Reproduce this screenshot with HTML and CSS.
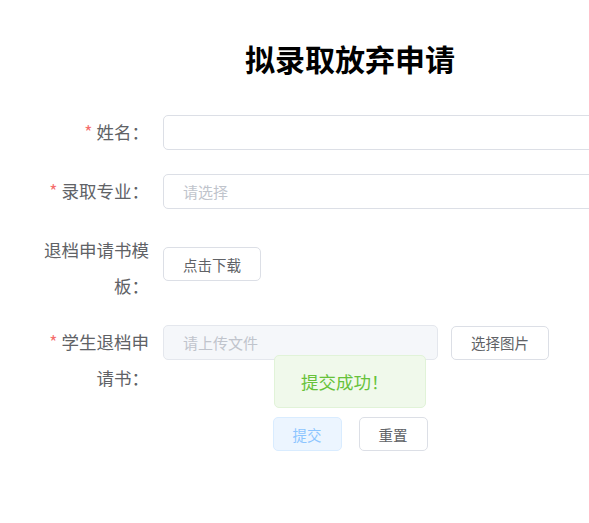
FILE: index.html
```html
<!DOCTYPE html>
<html lang="zh-CN">
<head>
  <meta charset="UTF-8">
  <meta name="viewport" content="width=device-width, initial-scale=1.0">
  <title>拟录取放弃申请</title>
  <link rel="stylesheet" href="styles.css">
</head>
<body>

  <div class="page">
    <h2 class="title">拟录取放弃申请</h2>

    <form class="apply-form">
      <div class="form-item">
        <label class="form-label is-required" for="name">姓名：</label>
        <div class="form-content">
          <input class="text-input" type="text" id="name">
        </div>
      </div>

      <div class="form-item">
        <label class="form-label is-required" for="major">录取专业：</label>
        <div class="form-content">
          <input class="text-input" type="text" id="major" placeholder="请选择" readonly>
        </div>
      </div>

      <div class="form-item form-item-tall">
        <label class="form-label">退档申请书模板：</label>
        <div class="form-content download-content">
          <button class="btn" type="button">点击下载</button>
        </div>
      </div>

      <div class="form-item form-item-tall">
        <label class="form-label is-required" for="file">学生退档申请书：</label>
        <div class="form-content upload-content">
          <input class="text-input upload-input" type="text" id="file" placeholder="请上传文件" disabled>
          <button class="btn" type="button">选择图片</button>
        </div>
      </div>

      <div class="form-actions">
        <button class="btn btn-primary" type="button" disabled>提交</button>
        <button class="btn" type="reset">重置</button>
      </div>
    </form>

    <!-- success message shown after submit -->
    <div class="message message-success">提交成功！</div>
  </div>

</body>
</html>
```

FILE: styles.css
```css
html {
  overflow: hidden;
}

/* no right margin: the form runs past the window edge */
body {
  margin: 8px 0 8px 8px;
  font-family: "Noto Sans CJK SC", "Noto Sans", sans-serif;
  color: #606266;
  background-color: #fff;
}

.page {
  position: relative;
  width: 684px;
  padding-top: 30px;
}

.title {
  margin: 0 0 37px;
  font-size: 30px;
  line-height: 40px;
  font-weight: bold;
  text-align: center;
  color: #000;
}

.apply-form {
  padding-left: 31px;
}

.form-item {
  display: flex;
  align-items: flex-start;
  margin-bottom: 23px;
}

.form-item-tall {
  margin-bottom: 20px;
}

.form-label {
  flex: none;
  width: 124px;
  box-sizing: border-box;
  padding-right: 14px;
  font-size: 17.5px;
  line-height: 36px;
  text-align: right;
  color: #606266;
  position: relative;
  top: -1px;
}

.form-label.is-required::before {
  content: "*";
  color: #f56c6c;
  margin-right: 4px;
}

.form-content {
  flex: 1;
  display: flex;
  align-items: center;
  min-width: 0;
}

.download-content {
  padding-top: 14px;
}

.upload-content {
  gap: 13px;
}

.text-input {
  width: 100%;
  height: 35px;
  box-sizing: border-box;
  padding: 0 19px;
  border: 1px solid #dcdfe6;
  border-radius: 5px;
  font-family: inherit;
  font-size: 15px;
  color: #606266;
  background-color: #fff;
  outline: none;
}

.text-input::placeholder {
  color: #c0c4cc;
}

.upload-input {
  flex: none;
  width: 275px;
  background-color: #f5f7fa;
  border-color: #e4e7ed;
}

.btn {
  flex: none;
  height: 34px;
  padding: 0 19px;
  border: 1px solid #dcdfe6;
  border-radius: 5px;
  font-family: inherit;
  font-size: 14.5px;
  color: #606266;
  background-color: #fff;
  cursor: pointer;
}

.btn-primary {
  color: #8cc5ff;
  background-color: #ecf5ff;
  border-color: #d9ecff;
  cursor: not-allowed;
}

.form-actions {
  display: flex;
  justify-content: center;
  gap: 17px;
  margin-left: -31px;
}

.message {
  position: absolute;
  top: 347px;
  left: 50%;
  transform: translateX(-50%);
  width: 152px;
  height: 53px;
  box-sizing: border-box;
  padding-left: 26px;
  border: 1px solid #e1f3d8;
  border-radius: 5px;
  font-size: 17.5px;
  line-height: 51px;
  z-index: 10;
}

.message-success {
  color: #67c23a;
  background-color: #f0f9eb;
}
```
